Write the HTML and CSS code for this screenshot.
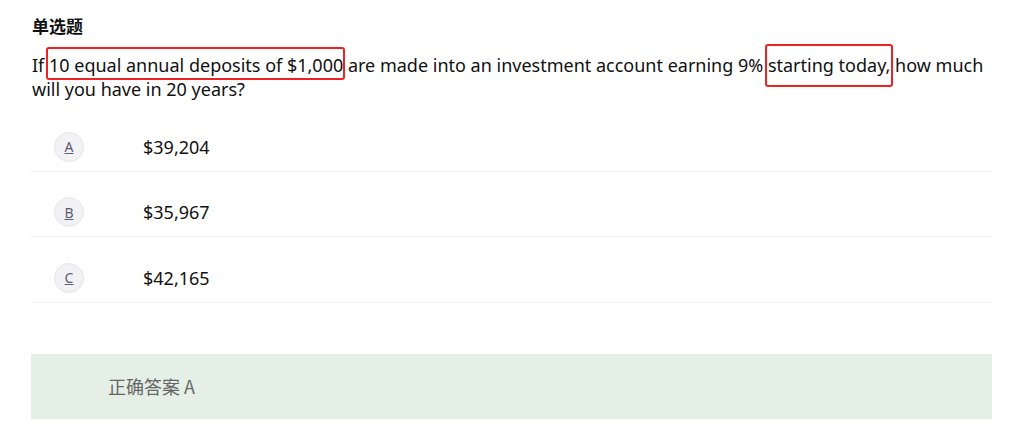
FILE: index.html
```html
<!DOCTYPE html>
<html lang="zh">
<head>
<meta charset="utf-8">
<link rel="stylesheet" href="styles.css">
</head>
<body>
<div class="page">
  <div class="title">单选题</div>
  <div class="question">If <span class="mark mark-a">10 equal annual deposits of $1,000</span> are made into an investment account earning 9% <span class="mark mark-b">starting today,</span> how much will you have in 20 years?</div>
  <div class="options">
    <div class="option"><span class="letter">A</span><span class="value">$39,204</span></div>
    <div class="option"><span class="letter">B</span><span class="value">$35,967</span></div>
    <div class="option"><span class="letter">C</span><span class="value">$42,165</span></div>
  </div>
  <div class="answer">正确答案 A</div>
</div>
</body>
</html>
```

FILE: styles.css
```css
* { box-sizing: border-box; }
html, body { margin: 0; padding: 0; background: #fff; }
body {
  font-family: "Noto Sans", "Noto Sans CJK SC", sans-serif;
  color: #111;
}
.page {
  width: 961px;
  margin-left: 31px;
  padding-top: 14px;
}
.title {
  font-family: "Noto Sans CJK SC", sans-serif;
  font-weight: 700;
  font-size: 17px;
  line-height: 24px;
  padding-left: 1px;
}
.question {
  margin-top: 15px;
  padding-left: 1px;
  font-size: 18px;
  line-height: 24px;
}
.mark { position: relative; }
.mark::after {
  content: "";
  position: absolute;
  border: 2px solid #ee2222;
  border-radius: 3px;
  pointer-events: none;
}
.mark-a::after { left: -3px; right: -2px; top: -6px; bottom: -3px; }
.mark-b::after { left: -3px; right: -3px; top: -9px; bottom: -10px; }
.options { margin-top: 5px; }
.option {
  display: flex;
  align-items: center;
  height: 65.5px;
  padding-top: 17px;
  padding-left: 23px;
  border-bottom: 1px solid #f2f2f2;
}
.letter {
  width: 30px;
  height: 30px;
  border-radius: 50%;
  background: #f2f1f4;
  border: 1px solid #e6e6e8;
  display: flex;
  align-items: center;
  justify-content: center;
  font-size: 14px;
  color: #5d5c78;
  text-decoration: underline;
}
.value {
  margin-left: 59px;
  font-size: 18px;
  color: #111;
}
.answer {
  margin-top: 51px;
  height: 65px;
  background: #e4efe6;
  display: flex;
  align-items: center;
  padding-left: 77px;
  font-family: "Noto Sans CJK SC", sans-serif;
  font-size: 18px;
  color: #666;
}
```
